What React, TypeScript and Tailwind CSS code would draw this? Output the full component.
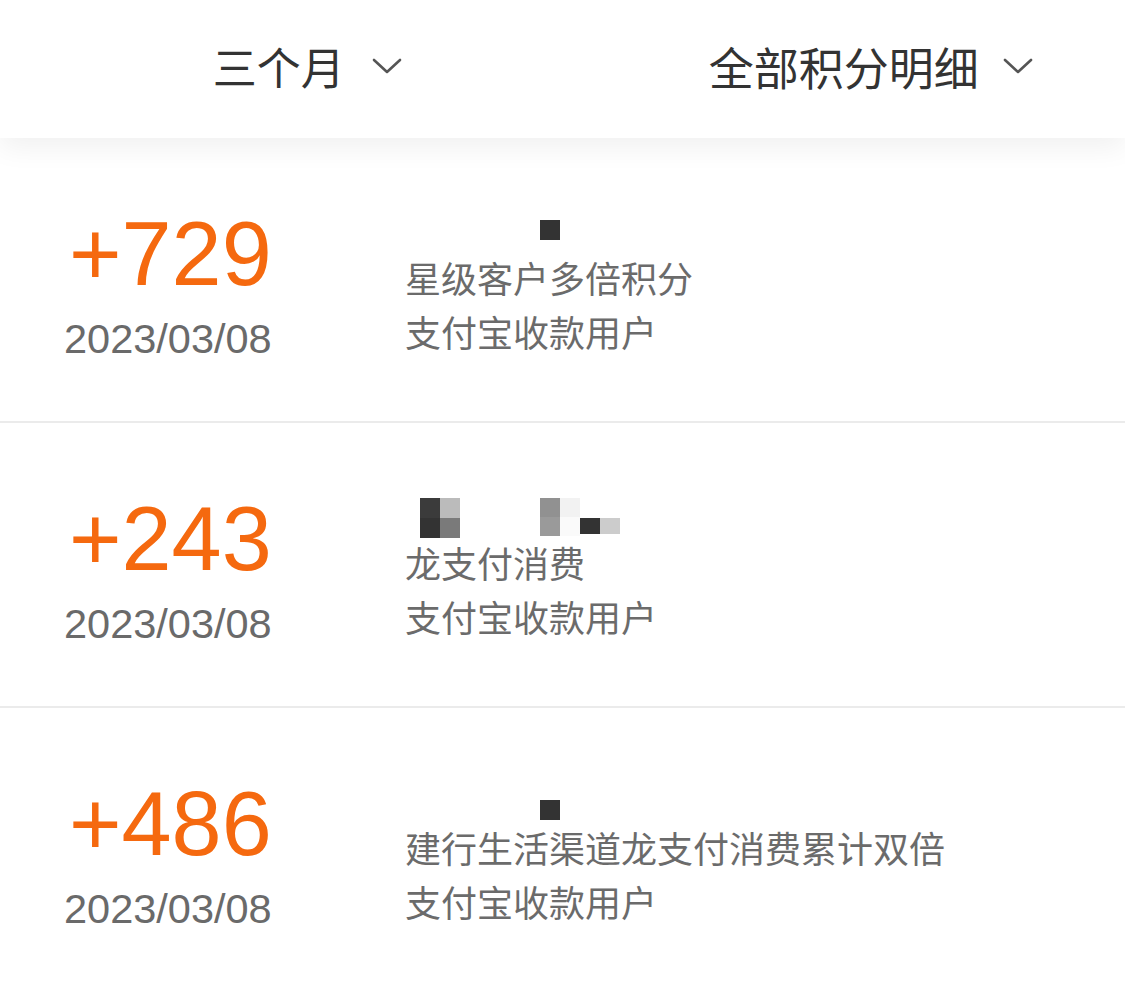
import React from "react";

const cjk = { fontFamily: '"Noto Sans CJK SC", "Noto Sans", sans-serif' };
const num = { fontFamily: '"Liberation Sans", Arial, sans-serif' };

function Chevron() {
  return (
    <svg width="30" height="18" viewBox="0 0 30 18" fill="none">
      <path d="M2 3 L15 15 L28 3" stroke="#555" strokeWidth="2.6" strokeLinecap="round" strokeLinejoin="round" />
    </svg>
  );
}

function Square({ left, top }: { left: number; top: number }) {
  return (
    <div className="absolute" style={{ left, top }}>
      <div className="w-[20px] h-[20px] bg-[#333333]" />
    </div>
  );
}

function Mosaic() {
  return (
    <>
      <div className="absolute left-[15px] top-[3px] grid grid-cols-2 grid-rows-2 w-[40px] h-[40px]">
        <div className="bg-[#3b3b3b]" />
        <div className="bg-[#bbbbbb]" />
        <div className="bg-[#333333]" />
        <div className="bg-[#7a7a7a]" />
      </div>
      <div className="absolute left-[135px] top-[3px] grid grid-cols-2 grid-rows-2 w-[40px] h-[38px]">
        <div className="bg-[#919191]" />
        <div className="bg-[#f2f2f2]" />
        <div className="bg-[#9a9a9a]" />
        <div className="bg-[#fafafa]" />
      </div>
      <div className="absolute left-[175px] top-[23px] flex h-[16px]">
        <div className="w-[20px] bg-[#333333]" />
        <div className="w-[20px] bg-[#cccccc]" />
      </div>
    </>
  );
}

type Row = { value: string; date: string; title: string; sub: string; redact: "sq1" | "mosaic" | "sq3" };

const rows: Row[] = [
  { value: "+729", date: "2023/03/08", title: "星级客户多倍积分", sub: "支付宝收款用户", redact: "sq1" },
  { value: "+243", date: "2023/03/08", title: "龙支付消费", sub: "支付宝收款用户", redact: "mosaic" },
  { value: "+486", date: "2023/03/08", title: "建行生活渠道龙支付消费累计双倍", sub: "支付宝收款用户", redact: "sq3" },
];

export default function App() {
  return (
    <div className="w-[1125px] h-[991px] bg-white overflow-hidden">
      <div className="relative z-10 h-[138px] pb-[6px] bg-white grid grid-cols-2 shadow-[0_10px_26px_rgba(0,0,0,0.06)]">
        <div className="flex items-center justify-center">
          <div className="ml-[52px] flex items-center gap-[27px]">
            <span className="text-[44px] leading-none text-[#333333]" style={cjk}>三个月</span>
            <Chevron />
          </div>
        </div>
        <div className="flex items-center justify-center">
          <div className="ml-[54px] flex items-center gap-[24px]">
            <span className="text-[45px] leading-none text-[#333333]" style={cjk}>全部积分明细</span>
            <Chevron />
          </div>
        </div>
      </div>
      {rows.map((r, i) => (
        <div key={i} className={`flex h-[285px] ${i < 2 ? "border-b-2 border-[#ebebeb]" : ""}`}>
          <div className="w-[405px] pl-[64px] pt-[71px] flex flex-col">
            <div className="pl-[5px] text-[90px] leading-[90px] text-[#f5690f]" style={num}>{r.value}</div>
            <div className="mt-[16px] text-[41.5px] leading-[48px] text-[#6a6a6a]" style={num}>{r.date}</div>
          </div>
          <div className="flex-1 pt-[72px] flex flex-col">
            <div className="relative h-[40px]">
              {r.redact === "sq1" && <Square left={135} top={10} />}
              {r.redact === "sq3" && <Square left={135} top={20} />}
              {r.redact === "mosaic" && <Mosaic />}
            </div>
            <div className="text-[36px] leading-[54px] text-[#6b6b6b]" style={cjk}>{r.title}</div>
            <div className="text-[36px] leading-[54px] text-[#6b6b6b]" style={cjk}>{r.sub}</div>
          </div>
        </div>
      ))}
    </div>
  );
}
